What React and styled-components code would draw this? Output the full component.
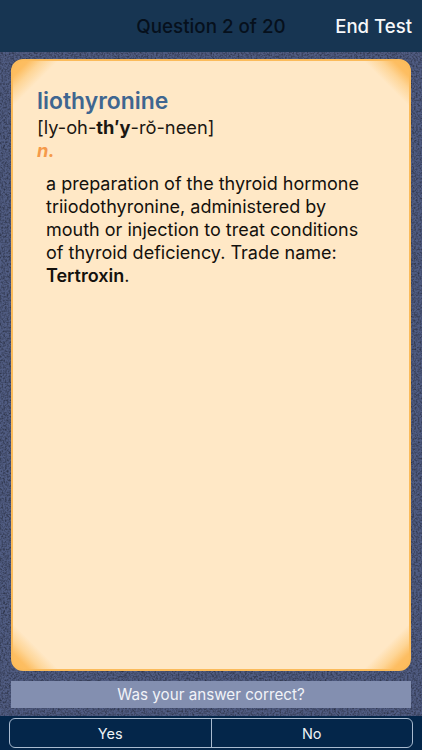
import React from "react";
import styled, { createGlobalStyle } from "styled-components";

const Global = createGlobalStyle`
  html, body { margin: 0; padding: 0; }
  body { font-family: Inter, "Liberation Sans", sans-serif; }
`;

const noise = encodeURIComponent(
  "<svg xmlns='http://www.w3.org/2000/svg' width='422' height='750'><filter id='n'><feTurbulence type='fractalNoise' baseFrequency='0.55' numOctaves='2' seed='4'/><feColorMatrix values='0 0 0 0 0 0 0 0 0 0 0 0 0 0 0 0.9 0 0 0 -0.34'/></filter><rect width='422' height='750' filter='url(#n)'/></svg>"
);

const Screen = styled.div`
  width: 422px;
  height: 750px;
  overflow: hidden;
  display: flex;
  flex-direction: column;
  background-color: #505c82;
  background-image: url("data:image/svg+xml,${noise}");
`;

const Header = styled.header`
  height: 52px;
  flex: none;
  box-sizing: border-box;
  background: #173552;
  position: relative;
  display: flex;
  align-items: center;
  justify-content: flex-end;
  padding: 0 10px 0 0;
`;

const Title = styled.h1`
  position: absolute;
  left: 0;
  right: 0;
  margin: 0;
  text-align: center;
  font-size: 18.8px;
  font-weight: 500;
  color: #06101c;
`;

const EndButton = styled.button`
  position: relative;
  border: 0;
  padding: 0;
  background: none;
  font: 500 18.6px Inter, "Liberation Sans", sans-serif;
  color: #f6f8fa;
`;

const Main = styled.main`
  flex: 1;
  min-height: 0;
  display: flex;
  flex-direction: column;
  padding: 7px 11px 8px;
  gap: 10px;
`;

const Card = styled.article`
  flex: 1;
  box-sizing: border-box;
  border: 2px solid #fbbb5b;
  border-radius: 12px;
  padding: 26px 24px 0;
  background:
    linear-gradient(135deg, #fdbb58 0, #fdbe62 11px, #fed596 20px, transparent 32px),
    linear-gradient(225deg, #fdbb58 0, #fdbe62 11px, #fed596 20px, transparent 32px),
    linear-gradient(45deg, #fdbb58 0, #fdbe62 11px, #fed596 20px, transparent 32px),
    linear-gradient(315deg, #fdbb58 0, #fdbe62 11px, #fed596 20px, transparent 32px),
    #ffe8c6;
`;

const Word = styled.h2`
  margin: 0;
  font-size: 22.9px;
  line-height: 29px;
  font-weight: 600;
  color: #3f6690;
`;

const Phonetic = styled.p`
  margin: 0;
  font-size: 18.3px;
  line-height: 23px;
  color: #1b1712;
  b { font-weight: 700; }
`;

const Pos = styled.p`
  margin: 0;
  font-size: 18.3px;
  line-height: 22px;
  font-weight: 700;
  font-style: italic;
  color: #f59a4a;
`;

const Definition = styled.p`
  margin: 11px 16px 0 9px;
  font-size: 18px;
  line-height: 23px;
  color: #14110d;
  b { font-weight: 600; }
`;

const Prompt = styled.div`
  height: 27px;
  flex: none;
  display: flex;
  align-items: center;
  justify-content: center;
  background: #838fb0;
  color: #f1f3f8;
  font-size: 15.2px;
`;

const Footer = styled.footer`
  height: 34px;
  flex: none;
  box-sizing: border-box;
  padding: 2px 9px 2px;
  background: #04264a;
`;

const Segments = styled.div`
  height: 30px;
  display: flex;
  box-sizing: border-box;
  border: 1.5px solid #a9bbd0;
  border-radius: 6px;
`;

const Choice = styled.button`
  flex: 1;
  border: 0;
  padding: 0;
  background: none;
  color: #eef2f6;
  font: 400 14.5px Inter, "Liberation Sans", sans-serif;
  & + & { border-left: 1.5px solid #a9bbd0; }
`;

export default function App() {
  return (
    <Screen>
      <Global />
      <Header>
        <Title>Question 2 of 20</Title>
        <EndButton>End Test</EndButton>
      </Header>
      <Main>
        <Card>
          <Word>liothyronine</Word>
          <Phonetic>[ly-oh-<b>th&#8242;y</b>-rŏ-neen]</Phonetic>
          <Pos>n.</Pos>
          <Definition>
            a preparation of the thyroid hormone triiodothyronine, administered by mouth or injection to treat conditions of thyroid deficiency. Trade name: <b>Tertroxin</b>.
          </Definition>
        </Card>
        <Prompt>Was your answer correct?</Prompt>
      </Main>
      <Footer>
        <Segments>
          <Choice>Yes</Choice>
          <Choice>No</Choice>
        </Segments>
      </Footer>
    </Screen>
  );
}
